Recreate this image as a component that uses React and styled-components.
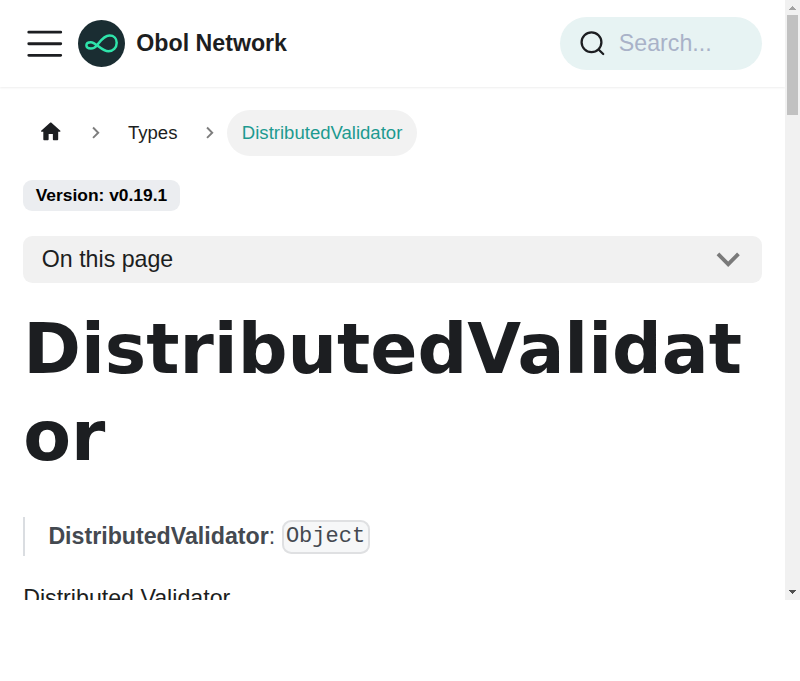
import React from "react";
import styled, { createGlobalStyle } from "styled-components";

const GlobalStyle = createGlobalStyle`
  html { font-size: 23.2px; }
  body {
    margin: 0;
    background: #fff;
    color: #1c1e21;
    font-family: "Liberation Sans", Arial, sans-serif;
    line-height: 1.65;
  }
  *, *::before, *::after { box-sizing: border-box; }
`;

const Frame = styled.div`
  display: flex;
  width: 800px;
  height: 600px;
  overflow: hidden;
`;

const Page = styled.div`
  flex: 1;
  min-width: 0;
  height: 600px;
  overflow: hidden;
`;

const Navbar = styled.nav`
  display: flex;
  align-items: center;
  height: 87px;
  padding: 0 1rem;
  background: #fff;
  box-shadow: 0 1px 2px 0 rgba(0, 0, 0, 0.07);
`;

const MenuButton = styled.button`
  display: flex;
  margin: 0 11.6px 0 0;
  padding: 0;
  border: 0;
  background: none;
  color: #1c1e21;
`;

const Brand = styled.a`
  display: flex;
  align-items: center;
  gap: 11px;
  margin-right: auto;
  font-weight: 700;
  white-space: nowrap;
`;

const SearchBox = styled.div`
  display: flex;
  align-items: center;
  gap: 12px;
  width: 202px;
  height: 53px;
  padding-left: 19px;
  border-radius: 27px;
  background: #e7f3f3;
  color: #a9b2c8;
`;

const Main = styled.main`
  padding: 23px 23px 0 23.2px;
`;

const Breadcrumbs = styled.ul`
  display: flex;
  align-items: center;
  height: 46px;
  margin: 0 0 24px;
  padding: 0;
  list-style: none;
  font-size: 18.56px;
`;

const Crumb = styled.li`
  display: flex;
  align-items: center;
  height: 46px;
  padding: 0 14.85px;
  border-radius: 23px;
  background: ${(p) => (p.$active ? "#f2f2f2" : "transparent")};
  color: ${(p) => (p.$active ? "#1d9a90" : "#1c1e21")};
`;

const HomeLink = styled.a`
  display: flex;
  padding-bottom: 2px;
`;

const Separator = styled.li`
  display: flex;
  margin: 0 5.68px;
`;

const Badge = styled.span`
  display: flex;
  align-items: center;
  width: 157px;
  height: 31px;
  padding-left: 12.5px;
  border-radius: 9px;
  background: #ebedf0;
  color: #000;
  font-size: 17.4px;
  font-weight: 700;
  line-height: 1;
  white-space: nowrap;
`;

const TocButton = styled.button`
  display: flex;
  align-items: center;
  justify-content: space-between;
  width: 100%;
  height: 47px;
  margin: 25px 0 22px;
  padding: 0 10.2px 0 18.6px;
  border: 0;
  border-radius: 9.3px;
  background: #f1f1f1;
  color: #1c1e21;
  font: inherit;
`;

const Title = styled.h1`
  margin: 0 0 38px;
  font-family: "DejaVu Sans", sans-serif;
  font-size: 69.6px;
  font-weight: 700;
  line-height: 87px;
  overflow-wrap: anywhere;
`;

const Quote = styled.blockquote`
  margin: 0 0 23px;
  padding-left: 23.2px;
  border-left: 2px solid #dadde1;
  color: #444950;
  height: 39px;
  line-height: 38px;
`;

const Code = styled.code`
  padding: 2.3px 2.3px 3.3px;
  border: 2px solid #dfe0e2;
  border-radius: 9.3px;
  background: #f6f7f8;
  font-family: "Liberation Mono", monospace;
  font-size: 22.04px;
  line-height: 1;
  vertical-align: 2px;
`;

const Paragraph = styled.p`
  margin: 0;
`;

const Scrollbar = styled.div`
  display: flex;
  flex-direction: column;
  align-items: center;
  width: 15px;
  height: 600px;
  background: #f1f1f1;
`;

const ScrollThumb = styled.div`
  width: 11px;
  height: 100px;
  margin-bottom: auto;
  background: #c1c1c1;
`;

const MenuIcon = () => (
  <svg width="43.5" height="43.5" viewBox="0 0 30 30" fill="none" stroke="currentColor" strokeWidth="2" strokeLinecap="round">
    <path d="M4 7h22M4 15h22M4 23h22" />
  </svg>
);

const Logo = () => (
  <svg width="47" height="47" viewBox="0 0 47 47" fill="none">
    <circle cx="23.5" cy="23.5" r="23.5" fill="#1a2d32" />
    <path
      d="M19.3 25C22.5 21 26 15.600 31.500 15.600C36 15.600 38.700 18.500 38.700 22.800C38.700 27.800 35 31.200 30.500 31.200C23.500 31.200 18 22.200 12.800 22.200C10.200 22.200 8.400 23.500 8.400 25.300C8.400 27.400 10.400 28.500 12.800 28.500C16 28.500 17.600 27.200 19.300 25Z"
      stroke="#2fe4ab"
      strokeWidth="2.5"
    />
  </svg>
);

const SearchIcon = () => (
  <svg width="28" height="28" viewBox="0 0 28 28" fill="none" stroke="#1c1e21" strokeWidth="2.3" strokeLinecap="round">
    <circle cx="12.5" cy="12.300" r="9.900" />
    <path d="M19.800 19.700L24.200 24" />
  </svg>
);

const HomeIcon = () => (
  <svg width="25.5" height="25.5" viewBox="0 0 24 24" fill="currentColor">
    <path d="M10 19v-5h4v5c0 .55.45 1 1 1h3c.55 0 1-.45 1-1v-7h1.7c.46 0 .68-.57.33-.87L12.67 3.6c-.38-.34-.96-.34-1.34 0l-8.36 7.53c-.34.3-.13.87.33.87H5v7c0 .55.45 1 1 1h3c.55 0 1-.45 1-1z" />
  </svg>
);

const CrumbChevron = () => (
  <svg width="23.4" height="23.4" viewBox="0 0 24 24" fill="#7d7d7d">
    <path d="M9.984 6l6 6-6 6-1.406-1.406 4.594-4.594-4.594-4.594z" />
  </svg>
);

const TocChevron = () => (
  <svg width="46.4" height="46.4" viewBox="0 0 24 24" fill="#7a7a7a">
    <path d="M7.410 8.590L12 13.170l4.590-4.580L18 10l-6 6-6-6z" />
  </svg>
);

const ScrollArrow = ({ down }) => (
  <svg width="15" height="15" viewBox="0 0 15 15" fill={down ? "#505050" : "#a3a3a3"} shapeRendering="crispEdges">
    <path d={down ? "M4 5h7v1h-1v1h-1v1h-1v1h-1v-1h-1v-1h-1v-1h-1z" : "M4 10h7v-1h-1v-1h-1v-1h-1v-1h-1v1h-1v1h-1v1h-1z"} />
  </svg>
);

export default function App() {
  return (
    <>
      <GlobalStyle />
      <Frame>
        <Page>
          <Navbar>
            <MenuButton aria-label="Toggle navigation">
              <MenuIcon />
            </MenuButton>
            <Brand>
              <Logo />
              <span>Obol Network</span>
            </Brand>
            <SearchBox>
              <SearchIcon />
              <span>Search...</span>
            </SearchBox>
          </Navbar>
          <Main>
            <Breadcrumbs>
              <Crumb><HomeLink aria-label="Home page"><HomeIcon /></HomeLink></Crumb>
              <Separator><CrumbChevron /></Separator>
              <Crumb>Types</Crumb>
              <Separator><CrumbChevron /></Separator>
              <Crumb $active>DistributedValidator</Crumb>
            </Breadcrumbs>
            <Badge>Version: v0.19.1</Badge>
            <TocButton>
              <span>On this page</span>
              <TocChevron />
            </TocButton>
            <Title>DistributedValidator</Title>
            <Quote>
              <strong>DistributedValidator</strong>: <Code>Object</Code>
            </Quote>
            <Paragraph>Distributed Validator</Paragraph>
          </Main>
        </Page>
        <Scrollbar>
          <ScrollArrow />
          <ScrollThumb />
          <ScrollArrow down />
        </Scrollbar>
      </Frame>
    </>
  );
}
